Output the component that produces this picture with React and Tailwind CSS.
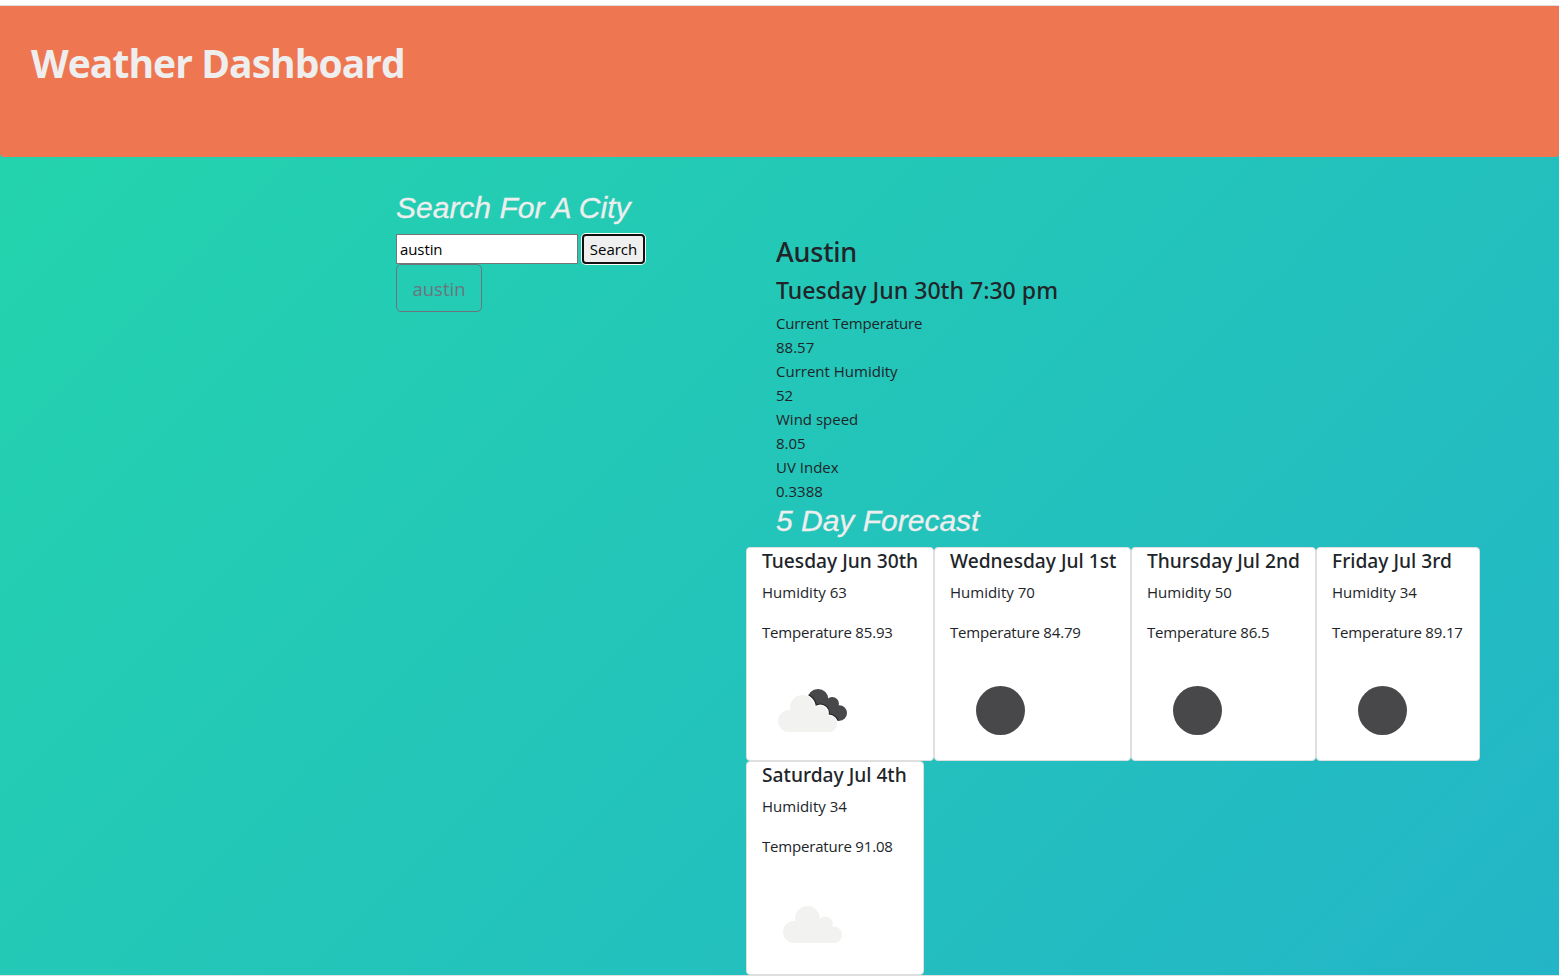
import React from "react";

const current = [
  ["Current Temperature", "88.57"],
  ["Current Humidity", "52"],
  ["Wind speed", "8.05"],
  ["UV Index", "0.3388"],
];

const days = [
  { title: "Tuesday Jun 30th", humidity: "63", temp: "85.93", icon: "broken", width: "w-[188px]" },
  { title: "Wednesday Jul 1st", humidity: "70", temp: "84.79", icon: "clear", width: "w-[197px]" },
  { title: "Thursday Jul 2nd", humidity: "50", temp: "86.5", icon: "clear", width: "w-[185px]" },
  { title: "Friday Jul 3rd", humidity: "34", temp: "89.17", icon: "clear", width: "w-[164px]" },
  { title: "Saturday Jul 4th", humidity: "34", temp: "91.08", icon: "cloud", width: "w-[178px]" },
];

function CloudShape() {
  return (
    <>
      <circle cx="27" cy="61" r="11" />
      <circle cx="40.4" cy="47.4" r="12.4" />
      <circle cx="58.3" cy="53.1" r="7.6" />
      <circle cx="66.7" cy="63.8" r="8.3" />
      <path d="M27 72 V52 H52 L60 56 L67 60 V72 Z" />
    </>
  );
}

function RearCloudShape() {
  return (
    <>
      <circle cx="56" cy="39.5" r="10.5" />
      <circle cx="70.2" cy="43.8" r="6.8" />
      <circle cx="77.3" cy="53" r="7.7" />
      <path d="M54 45 L66 41 L74 47 L78 60.6 H62 Z" />
    </>
  );
}

function WeatherIcon({ kind }) {
  return (
    <svg width="100" height="100" viewBox="0 0 100 100" className="block shrink-0">
      {kind === "clear" && <circle cx="50.5" cy="50.5" r="24.5" fill="#48484a" />}
      {kind === "cloud" && (
        <g transform="translate(5 -3)" fill="#f2f2f0">
          <CloudShape />
        </g>
      )}
      {kind === "broken" && (
        <>
          <clipPath id="behind">
            <RearCloudShape />
          </clipPath>
          <g fill="#48484a">
            <RearCloudShape />
          </g>
          <g fill="#252527" clipPath="url(#behind)">
            <circle cx="40.4" cy="47.4" r="14.6" />
            <circle cx="58.3" cy="53.1" r="9.6" />
            <circle cx="66.7" cy="63.8" r="10.4" />
          </g>
          <g fill="#fff" stroke="#fff" strokeWidth="2">
            <CloudShape />
          </g>
          <g fill="#f2f2f0">
            <CloudShape />
          </g>
        </>
      )}
    </svg>
  );
}

function DayCard({ day }) {
  return (
    <div className={`${day.width} h-[214px] rounded-[4px] border border-[#dfdfdf] bg-white pl-[15px] whitespace-nowrap`}>
      <h5 className="mt-[1px] h-[24px] font-['Noto_Sans','Open_Sans',sans-serif] text-[19.2px] leading-[24px] font-medium">
        {day.title}
      </h5>
      <p className="mt-[7px] text-[15px] leading-6">Humidity {day.humidity}</p>
      <p className="mt-4 text-[15px] leading-6 tracking-[-0.19px]">Temperature {day.temp}</p>
      <div className="mt-4">
        <WeatherIcon kind={day.icon} />
      </div>
    </div>
  );
}

export default function App() {
  return (
    <div className="flex h-[976px] w-full flex-col overflow-hidden bg-white font-['Open_Sans','Noto_Sans',sans-serif] text-[15px] text-[#212529]">
      <div className="h-[6px] shrink-0 border-b border-[#dcdcdc] bg-white" />
      <div className="h-[969px] shrink-0 bg-[linear-gradient(-45deg,#ee7752,#e73c7e,#23a6d5,#23d5ab)] bg-[length:445%_445%]">
        <header className="h-[151px] rounded-b-[4px] bg-[#ee7752] pt-[33px] pl-[31px]">
          <h1 className="text-[39px] leading-[48px] font-bold tracking-[-0.95px] whitespace-nowrap text-[#eee]">
            Weather Dashboard
          </h1>
        </header>
        <main className="flex pl-[396px]">
          <section className="w-[350px] pt-[33px]">
            <h2 className="font-['Liberation_Sans',Arial,sans-serif] text-[30px] leading-[36px] text-[#eee] italic [-webkit-text-stroke:0.3px_#eee]">
              Search For A City
            </h2>
            <form className="mt-[8px] flex gap-[4px]" onSubmit={(e) => e.preventDefault()}>
              <input
                defaultValue="austin"
                className="h-[30px] w-[182px] border border-[#767676] bg-white px-[3px] text-[15px] tracking-[-0.1px] text-black outline-none"
              />
              <button className="h-[30px] w-[63px] rounded-[4px] border-2 border-[#101010] bg-[#efefef] text-[15px] leading-[25px] text-black shadow-[0_0_0_1px_#fff]">
                Search
              </button>
            </form>
            <button className="block h-[48px] w-[86px] rounded-[5px] border border-[#6c757d] pt-px text-[18.5px] leading-[30px] text-[#6c757d]">
              austin
            </button>
          </section>
          <section className="w-[760px] pt-[77px]">
            <div className="pl-[30px]">
              <h3 className="font-['Noto_Sans','Open_Sans',sans-serif] text-[27px] leading-[36px] font-medium tracking-[-0.2px]">Austin</h3>
              <h4 className="mt-[5px] font-['Noto_Sans','Open_Sans',sans-serif] text-[23.1px] leading-[30px] font-medium">
                Tuesday Jun 30th 7:30 pm
              </h4>
              <div className="mt-[6px]">
                {current.map(([label, value]) => (
                  <div key={label} className="leading-6">
                    <p className={label === "Current Temperature" ? "tracking-[-0.17px]" : ""}>{label}</p>
                    <p>{value}</p>
                  </div>
                ))}
              </div>
              <h2 className="font-['Liberation_Sans',Arial,sans-serif] text-[30px] leading-[36px] text-[#eee] italic [-webkit-text-stroke:0.3px_#eee]">
                5 Day Forecast
              </h2>
            </div>
            <div className="mt-[8px] flex flex-wrap">
              {days.map((day) => (
                <DayCard key={day.title} day={day} />
              ))}
            </div>
          </section>
        </main>
      </div>
      <div className="h-px shrink-0 bg-[#dedede]" />
    </div>
  );
}
